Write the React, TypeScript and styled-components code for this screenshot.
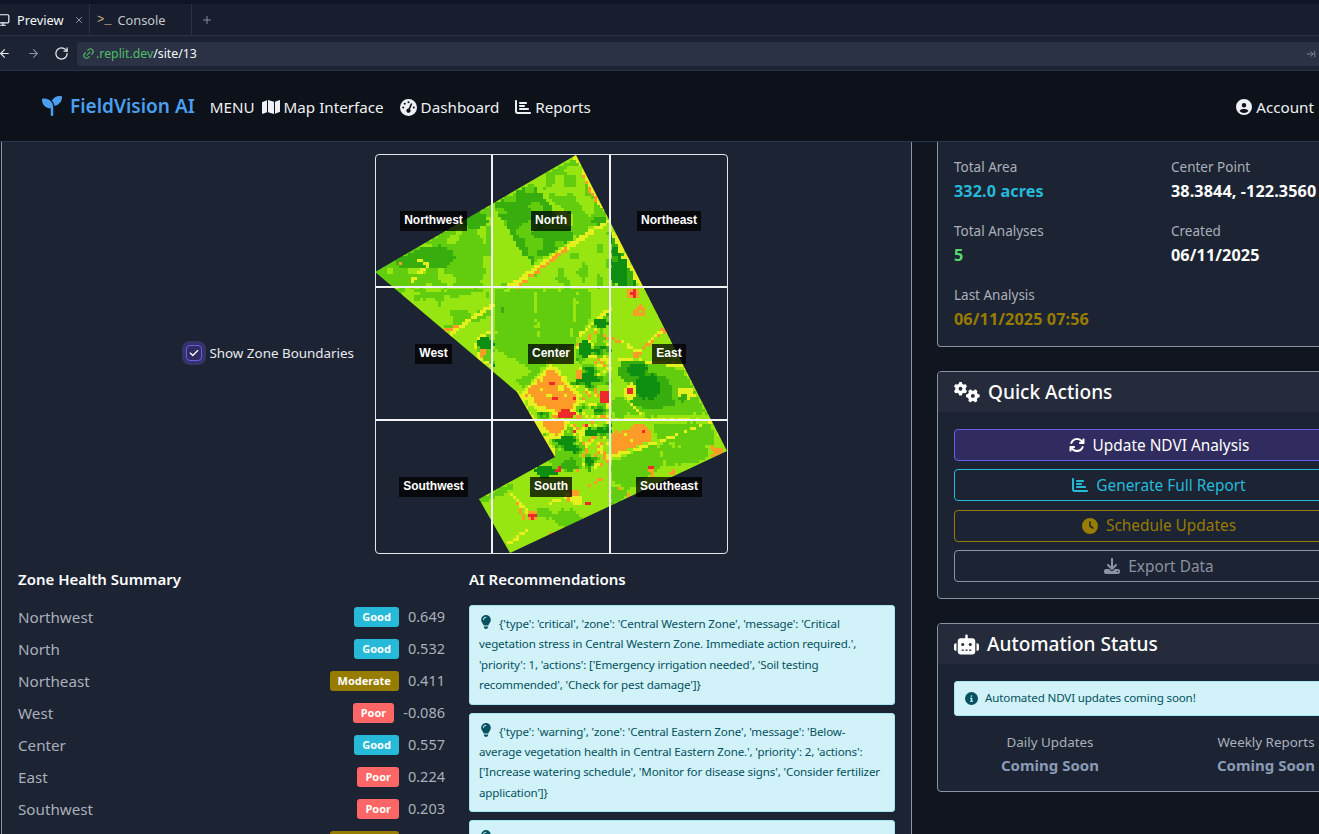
import React from "react";
import styled, { createGlobalStyle } from "styled-components";
import {
  FaArrowsRotate, FaChartBar, FaCircleInfo, FaCircleUser, FaClock, FaDownload, FaGaugeHigh, FaGears,
  FaLightbulb, FaMap, FaRobot, FaSeedling, FaCheck,
} from "react-icons/fa6";
import { ArrowLeft, ArrowRight, RotateCw, Link2, Monitor, Plus, X, ArrowRightToLine } from "lucide-react";

const Global = createGlobalStyle`
  html, body { margin: 0; padding: 0; height: 100%; overflow: hidden; background: #11151f; }
  body { font-family: "Noto Sans", "Liberation Sans", sans-serif; color: #fff; }
  * { box-sizing: border-box; }
`;

const Page = styled.div`
  width: 1319px; height: 834px; overflow: hidden; display: flex; flex-direction: column;
`;
const TopStrip = styled.div`height: 4px; background: #0e1525;`;
const TabBar = styled.div`
  height: 32px; display: flex; align-items: stretch; background: #181e2d; border-bottom: 1px solid #2b3245;
`;
const Tab = styled.div<{ $active?: boolean; $w: number }>`
  width: ${p => p.$w}px; display: flex; align-items: center; font-size: 12.8px;
  color: ${p => (p.$active ? "#f5f9fc" : "#c2c8cc")};
  border-right: 1px solid #2b3245; position: relative;
`;
const TabIcon = styled.span<{ $ml: number; $c?: string }>`
  display: inline-flex; margin-left: ${p => p.$ml}px; margin-right: 7px; color: ${p => p.$c || "#f5f9fc"};
`;
const Prompt = styled.span`
  font-size: 12px; margin-left: 7px; margin-right: 6px; color: #c7b58a; letter-spacing: 0; font-family: "Liberation Mono", monospace;
`;
const TabClose = styled.span`display: inline-flex; margin-left: 10px; color: #a8adb8;`;
const AddTab = styled.span`display: inline-flex; align-items: center; margin-left: 7px; color: #8a90a0;`;
const AddressRow = styled.div`
  height: 35px; display: flex; align-items: center; background: #1c2333; border-bottom: 1px solid #2b3245; padding-top: 1px;
`;
const NavIcon = styled.span<{ $ml: number; $c: string }>`
  display: inline-flex; margin-left: ${p => p.$ml}px; color: ${p => p.$c};
`;
const AddressField = styled.div`
  flex: 1; height: 24px; margin-left: 8px; background: #2b3245; border-radius: 4px 0 0 4px;
  display: flex; align-items: center; padding-left: 5px; font-size: 12.3px; position: relative;
`;
const Green = styled.span`color: #4fbf67; margin-left: 1px;`;
const White = styled.span`color: #f5f9fc;`;
const FieldEnd = styled.span`margin-left: auto; margin-right: 3px; display: inline-flex; color: #8a90a0;`;

const TopNav = styled.nav`
  height: 71px; display: flex; align-items: center; padding: 2px 5px 0 42px;
  background: #0d1119;
  border-bottom: 1px solid #2a3550; flex: none;
`;
const Brand = styled.div`
  display: flex; align-items: center; gap: 8px; color: #4a9ff0; font-size: 19px; font-weight: 600; margin-right: 15px; margin-top: -2px;
`;
const NavItem = styled.span<{ $mr?: number }>`
  display: inline-flex; align-items: center; gap: 4px; font-size: 15.2px; color: #eef0f4;
  margin-right: ${p => p.$mr ?? 16}px;
`;
const AccountItem = styled(NavItem)`margin-left: auto; margin-right: 0;`;

const Main = styled.main`
  flex: 1; min-height: 0; display: flex; align-items: flex-start; gap: 25px; padding-left: 1px; width: 1380px;
`;
const LeftCard = styled.section`
  flex: 0 0 910px; height: 900px; background: #1c2333; border: 1px solid #8b92a0; border-top: 0;
  border-radius: 0; padding: 12px 16px;
`;
const MapRow = styled.div`display: flex; align-items: center; gap: 21px;`;
const ToggleCol = styled.div`flex: 0 0 336px; display: flex; justify-content: flex-end; align-items: center; gap: 7px; font-size: 13.4px; color: #e8eaf0; padding-bottom: 2px;`;
const CheckBox = styled.span`
  width: 16px; height: 16px; border-radius: 4px; border: 1px solid #6c5ce7; background: #2f2b63;
  box-shadow: 0 0 0 4px rgba(108, 92, 231, .3); display: inline-flex; align-items: center; justify-content: center;
  color: #fff; font-size: 10px;
`;
const MapBox = styled.div`
  position: relative; width: 353px; height: 400px; flex: none; border: 1px solid #e4e6ea; border-radius: 4px; overflow: hidden;
`;
const MapSvg = styled.svg`display: block; position: absolute; left: -1px; top: -1px;`;
const ZoneGrid = styled.div`
  position: absolute; inset: 0; display: grid; grid-template-columns: 117px 118px 1fr; grid-template-rows: 133px 133px 1fr;
`;
const ZoneCell = styled.div<{ $r: boolean; $b: boolean }>`
  display: flex; align-items: center; justify-content: center;
  border-right: ${p => (p.$r ? "2px solid #f0f2f5" : "0")};
  border-bottom: ${p => (p.$b ? "2px solid #f0f2f5" : "0")};
`;
const ZoneLabel = styled.span`
  background: rgba(0, 0, 0, .75); color: #fff; font: bold 12px/19px "Liberation Sans", Arial, sans-serif; padding: 0 4px 1px;
`;
const Columns = styled.div`display: grid; grid-template-columns: 427px 426px; gap: 24px; margin-top: 15px;`;
const Heading = styled.h6`margin: 0 0 16px; font-size: 15px; line-height: 20px; font-weight: 600; color: #fff;`;
const ZoneRow = styled.div`
  display: flex; align-items: flex-start; height: 24px; margin-bottom: 8px; font-size: 15.2px; line-height: 24px; color: #aab0ba;
`;
const ZoneName = styled.span`flex: 1;`;
const Badge = styled.span<{ $c: string }>`
  height: 20px; margin-top: 2px; padding: 0 8px; background: ${p => p.$c}; border-radius: 3px; color: #fff;
  font-size: 11px; font-weight: 700; line-height: 20px;
`;
const ZoneValue = styled.span`margin-left: 9px; font-size: 14.5px; line-height: 22px;`;
const Alert = styled.div`
  background: #d0f2f8; border: 1px solid #a5e6f3; border-radius: 3px; color: #055160;
  padding: 8px 9px; font-size: 11.6px; letter-spacing: -.15px; line-height: 20.4px; margin-bottom: 8px;
`;
const AlertIcon = styled.span`display: inline-block; vertical-align: -1px; margin-right: 6px; font-size: 14px; line-height: 1;`;

const RightCol = styled.div`flex: none; width: 444px; min-width: 0; display: flex; flex-direction: column; gap: 24px;`;
const Card = styled.section<{ $noTop?: boolean }>`
  background: #1c2333; border: 1px solid #8b92a0; border-radius: 4px; overflow: hidden;
  ${p => (p.$noTop ? "border-top: 0; border-top-left-radius: 0; border-top-right-radius: 0;" : "")}
`;
const InfoGrid = styled.div`
  display: grid; grid-template-columns: 217px 1fr; row-gap: 16px; padding: 13px 16px 15px;
`;
const InfoLabel = styled.div`font-size: 13.5px; line-height: 24px; color: #aab0ba;`;
const InfoValue = styled.div<{ $c: string }>`font-size: 16.2px; letter-spacing: .1px; font-weight: 700; line-height: 24px; color: ${p => p.$c}; white-space: nowrap;`;
const CardHeader = styled.header`
  height: 40px; background: #252b3b; display: flex; align-items: center; gap: 8px; padding-left: 16px;
  font-size: 19.1px; font-weight: 500; color: #fff;
`;
const CardBody = styled.div`padding: 17px 16px 16px; display: flex; flex-direction: column;`;
const ActionBtn = styled.button<{ $c: string; $t: string; $bg?: string }>`
  height: 32px; margin-bottom: 8.4px; border-radius: 4px; border: 1px solid ${p => p.$c}; color: ${p => p.$t};
  background: ${p => p.$bg || "transparent"}; font: inherit; font-size: 15.4px; display: flex; align-items: center; justify-content: center; gap: 8px;
  &:last-child { margin-bottom: 0; }
  & svg { width: 16px; height: 16px; }
`;
const AutoAlert = styled(Alert)`
  display: flex; align-items: center; gap: 7px; height: 35px; padding: 0 10px; margin-bottom: 14px;
`;
const AutoGrid = styled.div`display: grid; grid-template-columns: 216px 216px; margin-left: -12px; margin-bottom: -1px;`;
const AutoCell = styled.div`text-align: center;`;
const AutoLabel = styled.div`font-size: 13.4px; line-height: 24px; color: #aab0ba;`;
const AutoValue = styled.div`font-size: 15px; line-height: 22px; font-weight: 700; color: #8b9ab5;`;

/* ---------- NDVI raster ---------- */
type Pt = [number, number];
const L = "#97e612", M = "#62cc0e", D = "#37ae0e", DD = "#0f8f12", Y = "#e6f01e", O = "#ff9c28", R = "#ee2b2b";
const z2 = (x: number, y: number): Pt => [370 + x / 3, 150 + y / 3];
const z3 = (x: number, y: number): Pt => [370 + x / 3, 350 + y / 3];
const z4 = (x: number, y: number): Pt => [480 + x / 3, 280 + y / 3];
const FIELD: Pt[] = [[576, 155], [727, 451], [510, 553], [479, 499], [555, 457], [517, 392], [375, 272]];

const hash = (x: number, y: number) => {
  const s = Math.sin(x * 127.1 + y * 311.7) * 43758.5453;
  return s - Math.floor(s);
};
const vnoise = (x: number, y: number, sc: number) => {
  const a = x / sc, b = y / sc;
  const i = Math.floor(a), j = Math.floor(b);
  const f = a - i, g = b - j;
  const u = f * f * (3 - 2 * f), v = g * g * (3 - 2 * g);
  const m = (p: number, q: number, t: number) => p + (q - p) * t;
  return m(m(hash(i, j), hash(i + 1, j), u), m(hash(i, j + 1), hash(i + 1, j + 1), u), v);
};
type Fill = string | ((x: number, y: number) => string);
const busy: Fill = (x, y) => {
  const n = vnoise(x, y, 10) * .7 + vnoise(x + 40, y + 9, 4) * .3;
  if (n < .32) return DD;
  if (n < .4) return D;
  if (n < .5) return M;
  if (n < .56) return L;
  if (n < .62) return Y;
  return n < .66 ? O : L;
};
const mixML: Fill = (x, y) => (vnoise(x, y, 10) > .62 ? L : M);
const mixDM: Fill = (x, y) => (vnoise(x, y, 9) > .62 ? M : D);
const mixLM: Fill = (x, y) => (vnoise(x, y, 8) > .66 ? M : L);
const mixDD: Fill = (x, y) => (vnoise(x, y, 7) > .55 ? D : DD);
const mixOS: Fill = (x, y) => (vnoise(x, y, 3) > .86 ? R : vnoise(x + 9, y, 5) > .82 ? Y : O);

type Layer =
  | { k: "poly"; p: Pt[]; f: Fill }
  | { k: "ell"; c: Pt; rx: number; ry: number; f: Fill }
  | { k: "line"; a: Pt; b: Pt; w: number; f: Fill };
const poly = (f: Fill, ...p: Pt[]): Layer => ({ k: "poly", p, f });
const ell = (f: Fill, c: Pt, rx: number, ry = rx): Layer => ({ k: "ell", c, rx, ry, f });
const line = (f: Fill, a: Pt, b: Pt, w: number): Layer => ({ k: "line", a, b, w, f });

const LAYERS: Layer[] = [
  poly(mixML, z2(14, 365), z2(365, 165), z2(365, 410), z2(60, 410)),
  ell(D, z2(190, 320), 22, 11), ell(D, z2(120, 335), 15, 7), ell(M, z2(300, 300), 14, 22), ell(D, z2(310, 210), 14, 8),
  line(Y, z2(175, 345), z2(150, 335), 1.5), line(Y, z2(175, 345), z2(125, 392), 1.5), line(O, z2(85, 335), z2(95, 340), 1.5),
  poly(mixDM, z2(370, 165), z2(490, 95), z2(615, 268), z2(480, 345)),
  poly(mixML, z2(490, 95), z2(620, 20), z2(715, 200), z2(620, 265)),
  line(L, z2(490, 95), z2(560, 175), 2), line(L, z2(370, 210), z2(480, 345), 2),
  ell(D, z2(690, 212), 7, 4), ell(D, z2(400, 165), 10, 4),
  poly(mixDD, z2(722, 240), z2(812, 405), z2(722, 405)),
  line(Y, z2(620, 20), z2(715, 195), 2.5), line(O, z2(640, 80), z2(680, 155), 1.2),
  line(Y, z2(722, 240), z2(815, 405), 2.5),
  poly(mixLM, z2(480, 380), z2(722, 245), z2(722, 412), z2(370, 412)),
  line(Y, z2(230, 540), z2(640, 260), 2.5), line(Y, z2(640, 260), z2(712, 215), 2),
  line(O, z2(370, 465), z2(590, 297), 1.5),
  poly(mixLM, z2(60, 412), z2(365, 412), z2(365, 500), z2(240, 540)),
  line(M, z2(140, 440), z2(330, 420), 3),
  line(O, z2(225, 540), z2(285, 525), 1.5), line(Y, z2(370, 465), z2(230, 560), 2),
  // west circle
  ell(Y, z4(40, 205), 18), ell(M, z4(40, 205), 15), ell(DD, z4(15, 190), 8, 6), ell(O, z4(10, 220), 4), ell(DD, z4(55, 265), 8, 5),
  // centre, north part
  poly(L, z4(40, 22), z4(390, 22), z4(390, 420), z4(130, 420), z4(40, 280)),
  poly(M, z4(45, 30), z4(330, 30), z4(335, 110), z4(290, 190), z4(160, 270), z4(50, 210)),
  line(L, z4(165, 40), z4(175, 170), 1.4), line(L, z4(290, 40), z4(275, 170), 1.6), line(D, z4(65, 80), z4(65, 100), 1.5),
  poly(M, z4(110, 300), z4(205, 240), z4(130, 330)),
  // busy centre
  poly(busy, z4(290, 175), z4(355, 115), z4(390, 90), z4(390, 420), z4(150, 420), z4(290, 300)),
  line(Y, z4(300, 165), z4(390, 85), 1.5), ell(DD, z4(365, 130), 7, 5), ell(DD, z4(315, 210), 6, 9),
  // orange block
  poly(Y, z4(118, 345), z4(215, 248), z4(300, 345), z4(285, 410), z4(230, 405), z4(165, 390)),
  poly(mixOS, z4(132, 345), z4(215, 262), z4(288, 350), z4(275, 398), z4(230, 390), z4(172, 375)),
  ell(R, z4(258, 402), 9, 5), ell(R, z4(372, 350), 5, 7), ell(O, z4(298, 288), 3, 5), ell(R, z4(402, 225), 3, 5),
  // east
  poly(L, z4(392, 22), z4(490, 22), z4(745, 510), z4(392, 420)),
  line(Y, z4(395, 175), z4(445, 190), 1.5), line(O, z4(400, 178), z4(442, 190), .8), line(Y, z4(445, 190), z4(475, 225), 1.5),
  line(Y, z4(465, 222), z4(552, 150), 1.5), line(O, z4(475, 218), z4(552, 155), .8), ell(O, z4(552, 152), 3), ell(O, z4(470, 222), 4, 3),
  ell(O, z4(460, 40), 7, 5), ell(R, z4(460, 42), 3), ell(O, z4(478, 95), 6), ell(L, z4(478, 95), 2),
  poly(M, z4(430, 250), z4(490, 240), z4(610, 270), z4(680, 400), z4(500, 410), z4(440, 320)),
  ell(Y, z4(620, 340), 8, 6), ell(M, z4(470, 380), 8, 9),
  line(Y, z4(420, 240), z4(610, 255), 1.5),
  ell(D, z4(462, 272), 16, 11), ell(D, z4(510, 335), 22, 18), ell(DD, z4(470, 270), 11, 6), ell(DD, z4(505, 320), 13, 12),
  ell(D, z4(610, 355), 4), ell(D, z4(570, 372), 5, 3),
  ell(Y, z4(450, 335), 6, 9), ell(R, z4(452, 337), 4, 2.5), line(Y, z4(440, 360), z4(480, 400), 1.2),
  line(L, z4(395, 310), z4(420, 330), 2), ell(M, z4(420, 380), 9, 10),
  line(Y, z4(390, 420), z4(690, 415), .8),
  // below the horizontal line, east
  poly(L, z4(392, 421), z4(700, 421), z4(745, 510), z4(392, 650)),
  poly(M, z4(518, 432), z4(690, 428), z4(705, 495), z4(540, 490)),
  poly(M, z4(540, 498), z4(690, 500), z4(680, 540), z4(560, 560)),
  poly(mixOS, z4(395, 460), z4(492, 428), z4(520, 478), z4(395, 525)),
  line(Y, z4(395, 532), z4(535, 487), 1.5), line(Y, z4(535, 487), z4(690, 425), 1),
  poly(O, z4(690, 490), z4(742, 514), z4(702, 532)),
  // below line, centre (busy)
  poly(busy, z4(150, 422), z4(392, 422), z4(392, 570), z4(200, 570), z4(225, 530)),
  poly(Y, z4(160, 422), z4(270, 422), z4(240, 480), z4(205, 470)),
  poly(O, z4(185, 425), z4(255, 425), z4(232, 470), z4(210, 460)),
  ell(R, z4(282, 456), 2), ell(R, z4(320, 435), 2), ell(DD, z4(335, 458), 8, 4),
  // field edges
  line(Y, z4(490, 5), z4(745, 512), 1.2),
  line(Y, z4(110, 335), z4(225, 530), 2),
  line(L, z3(290, 30), z3(440, 125), 1.5),
  // south
  poly(M, z3(722, 335), z3(860, 282), z3(885, 340), z3(780, 420), z3(722, 395)),
  ell(R, z3(840, 353), 2.5, 3.5), line(O, z3(840, 360), z3(850, 380), 1.5), ell(O, z3(905, 368), 2, 3),
  line(O, z3(750, 415), z3(780, 440), 1.5),
  poly(L, z3(330, 447), z3(500, 350), z3(640, 410), z3(722, 395), z3(722, 470), z3(420, 610)),
  poly(M, z3(722, 410), z3(780, 430), z3(722, 470)),
  ell(DD, z3(530, 362), 11, 6), ell(M, z3(590, 335), 16, 10), ell(D, z3(600, 345), 8, 6), ell(R, z3(567, 360), 2.5, 4),
  ell(O, z3(610, 440), 8, 6), ell(Y, z3(620, 450), 6, 5),
  ell(M, z3(590, 505), 14, 9), ell(M, z3(520, 490), 10, 5),
  line(M, z3(340, 450), z3(420, 410), 3),
  line(Y, z3(425, 430), z3(480, 500), 1.5), line(O, z3(650, 410), z3(690, 390), 1.5),
  ell(O, z3(488, 498), 5, 4), ell(R, z3(488, 498), 3), ell(R, z3(655, 462), 2),
  line(Y, z3(420, 580), z3(470, 540), 1.5), line(O, z3(445, 465), z3(470, 520), 1), ell(O, z3(540, 550), 2, 1.5),
  line(Y, z3(600, 430), z3(540, 460), 1.2),
];

const inPoly = (x: number, y: number, p: Pt[]) => {
  let c = false;
  for (let i = 0, j = p.length - 1; i < p.length; j = i++) {
    const [xi, yi] = p[i], [xj, yj] = p[j];
    if (yi > y !== yj > y && x < ((xj - xi) * (y - yi)) / (yj - yi) + xi) c = !c;
  }
  return c;
};
const segDist = (x: number, y: number, a: Pt, b: Pt) => {
  const dx = b[0] - a[0], dy = b[1] - a[1];
  const t = Math.max(0, Math.min(1, ((x - a[0]) * dx + (y - a[1]) * dy) / (dx * dx + dy * dy || 1)));
  return Math.hypot(x - a[0] - t * dx, y - a[1] - t * dy);
};
const buildRaster = () => {
  const paths: Record<string, string> = {};
  const S = 3;
  for (let r = 0; r < 134; r++) {
    let run = 0, prev = "";
    const flush = (c: number) => {
      if (prev) paths[prev] = (paths[prev] || "") + `M${(c - run) * S} ${r * S}h${run * S}v${S}h${-run * S}z`;
    };
    for (let c = 0; c < 118; c++) {
      const x0 = 375 + c * S + 1.5, y0 = 154 + r * S + 1.5;
      const x = x0 + (hash(c, r) - .5) * 1.8, y = y0 + (hash(r + 7, c + 3) - .5) * 1.8;
      let col: string = L;
      for (const l of LAYERS) {
        let hit = false;
        if (l.k === "poly") hit = inPoly(x, y, l.p);
        else if (l.k === "ell") hit = ((x - l.c[0]) / l.rx) ** 2 + ((y - l.c[1]) / l.ry) ** 2 <= 1;
        else hit = segDist(x, y, l.a, l.b) <= l.w;
        if (hit) col = typeof l.f === "string" ? l.f : l.f(x0, y0);
      }
      if (col === prev) run++;
      else { flush(c); prev = col; run = 1; }
    }
    flush(118);
  }
  return paths;
};
const RASTER = buildRaster();

const NdviMap = () => (
  <MapSvg width="352" height="399" viewBox="0 0 352 399" shapeRendering="crispEdges">
    <defs>
      <clipPath id="field">
        <polygon points={FIELD.map(([x, y]) => `${x - 375},${y - 154}`).join(" ")} />
      </clipPath>
    </defs>
    <g clipPath="url(#field)">
      {Object.entries(RASTER).map(([c, d]) => <path key={c} d={d} fill={c} />)}
    </g>
  </MapSvg>
);

const ZONE_LABELS = ["Northwest", "North", "Northeast", "West", "Center", "East", "Southwest", "South", "Southeast"];
const GOOD = "#27b9d8", MOD = "#977c00", POOR = "#ff6666";
const ZONES: [string, string, string, string][] = [
  ["Northwest", "Good", GOOD, "0.649"],
  ["North", "Good", GOOD, "0.532"],
  ["Northeast", "Moderate", MOD, "0.411"],
  ["West", "Poor", POOR, "-0.086"],
  ["Center", "Good", GOOD, "0.557"],
  ["East", "Poor", POOR, "0.224"],
  ["Southwest", "Poor", POOR, "0.203"],
  ["South", "Moderate", MOD, "0.412"],
];
const RECS = [
  "{'type': 'critical', 'zone': 'Central Western Zone', 'message': 'Critical vegetation stress in Central Western Zone. Immediate action required.', 'priority': 1, 'actions': ['Emergency irrigation needed', 'Soil testing recommended', 'Check for pest damage']}",
  "{'type': 'warning', 'zone': 'Central Eastern Zone', 'message': 'Below-average vegetation health in Central Eastern Zone.', 'priority': 2, 'actions': ['Increase watering schedule', 'Monitor for disease signs', 'Consider fertilizer application']}",
  "{'type': 'warning', 'zone': 'Southern Zone', 'message': 'Below-average vegetation health.'}",
];
const INFO: [string, string, string][] = [
  ["Total Area", "332.0 acres", GOOD],
  ["Center Point", "38.3844, -122.3560", "#ffffff"],
  ["Total Analyses", "5", "#5bd670"],
  ["Created", "06/11/2025", "#ffffff"],
  ["Last Analysis", "06/11/2025 07:56", MOD],
];

export default function App() {
  return (
    <Page>
      <Global />
      <TopStrip />
      <TabBar>
        <Tab $active $w={90}>
          <TabIcon $ml={-4}><Monitor size={14} /></TabIcon>Preview
          <TabClose><X size={10} /></TabClose>
        </Tab>
        <Tab $w={102}><Prompt>&gt;_</Prompt>Console</Tab>
        <AddTab><Plus size={12} style={{ marginLeft: 2 }} /></AddTab>
      </TabBar>
      <AddressRow>
        <NavIcon $ml={-2} $c="#e8eaf0"><ArrowLeft size={13} /></NavIcon>
        <NavIcon $ml={16} $c="#8a90a0"><ArrowRight size={13} /></NavIcon>
        <NavIcon $ml={14} $c="#e8eaf0"><RotateCw size={15} /></NavIcon>
        <AddressField>
          <NavIcon $ml={0} $c="#4fbf67"><Link2 size={13} style={{ transform: "rotate(-45deg)" }} /></NavIcon>
          <Green>.replit.dev</Green><White>/site/13</White>
          <FieldEnd><ArrowRightToLine size={10} /></FieldEnd>
        </AddressField>
      </AddressRow>
      <TopNav>
        <Brand><FaSeedling size={20} />FieldVision AI</Brand>
        <NavItem $mr={7}>MENU</NavItem>
        <NavItem><FaMap size={18} />Map Interface</NavItem>
        <NavItem><FaGaugeHigh size={17} />Dashboard</NavItem>
        <NavItem><FaChartBar size={16} />Reports</NavItem>
        <AccountItem><FaCircleUser size={16} />Account</AccountItem>
      </TopNav>
      <Main>
        <LeftCard>
          <MapRow>
            <ToggleCol><CheckBox><FaCheck /></CheckBox>Show Zone Boundaries</ToggleCol>
            <MapBox>
              <NdviMap />
              <ZoneGrid>
                {ZONE_LABELS.map((z, i) => (
                  <ZoneCell key={z} $r={i % 3 !== 2} $b={i < 6}><ZoneLabel>{z}</ZoneLabel></ZoneCell>
                ))}
              </ZoneGrid>
            </MapBox>
          </MapRow>
          <Columns>
            <div>
              <Heading>Zone Health Summary</Heading>
              {ZONES.map(([n, b, c, v]) => (
                <ZoneRow key={n}>
                  <ZoneName>{n}</ZoneName>
                  <Badge $c={c}>{b}</Badge>
                  <ZoneValue>{v}</ZoneValue>
                </ZoneRow>
              ))}
            </div>
            <div>
              <Heading>AI Recommendations</Heading>
              {RECS.map(r => (
                <Alert key={r}><AlertIcon><FaLightbulb /></AlertIcon>{r}</Alert>
              ))}
            </div>
          </Columns>
        </LeftCard>
        <RightCol>
          <Card $noTop>
            <InfoGrid>
              {INFO.map(([l, v, c]) => (
                <div key={l}>
                  <InfoLabel>{l}</InfoLabel>
                  <InfoValue $c={c}>{v}</InfoValue>
                </div>
              ))}
            </InfoGrid>
          </Card>
          <Card>
            <CardHeader><FaGears size={26} />Quick Actions</CardHeader>
            <CardBody>
              <ActionBtn $c="#6c5ce7" $t="#fff" $bg="#302c5f"><FaArrowsRotate />Update NDVI Analysis</ActionBtn>
              <ActionBtn $c={GOOD} $t={GOOD}><FaChartBar />Generate Full Report</ActionBtn>
              <ActionBtn $c={MOD} $t={MOD}><FaClock />Schedule Updates</ActionBtn>
              <ActionBtn $c="#8b92a0" $t="#8b92a0"><FaDownload />Export Data</ActionBtn>
            </CardBody>
          </Card>
          <Card>
            <CardHeader><FaRobot size={25} />Automation Status</CardHeader>
            <CardBody>
              <AutoAlert><FaCircleInfo size={13} />Automated NDVI updates coming soon!</AutoAlert>
              <AutoGrid>
                <AutoCell><AutoLabel>Daily Updates</AutoLabel><AutoValue>Coming Soon</AutoValue></AutoCell>
                <AutoCell><AutoLabel>Weekly Reports</AutoLabel><AutoValue>Coming Soon</AutoValue></AutoCell>
              </AutoGrid>
            </CardBody>
          </Card>
        </RightCol>
      </Main>
    </Page>
  );
}
